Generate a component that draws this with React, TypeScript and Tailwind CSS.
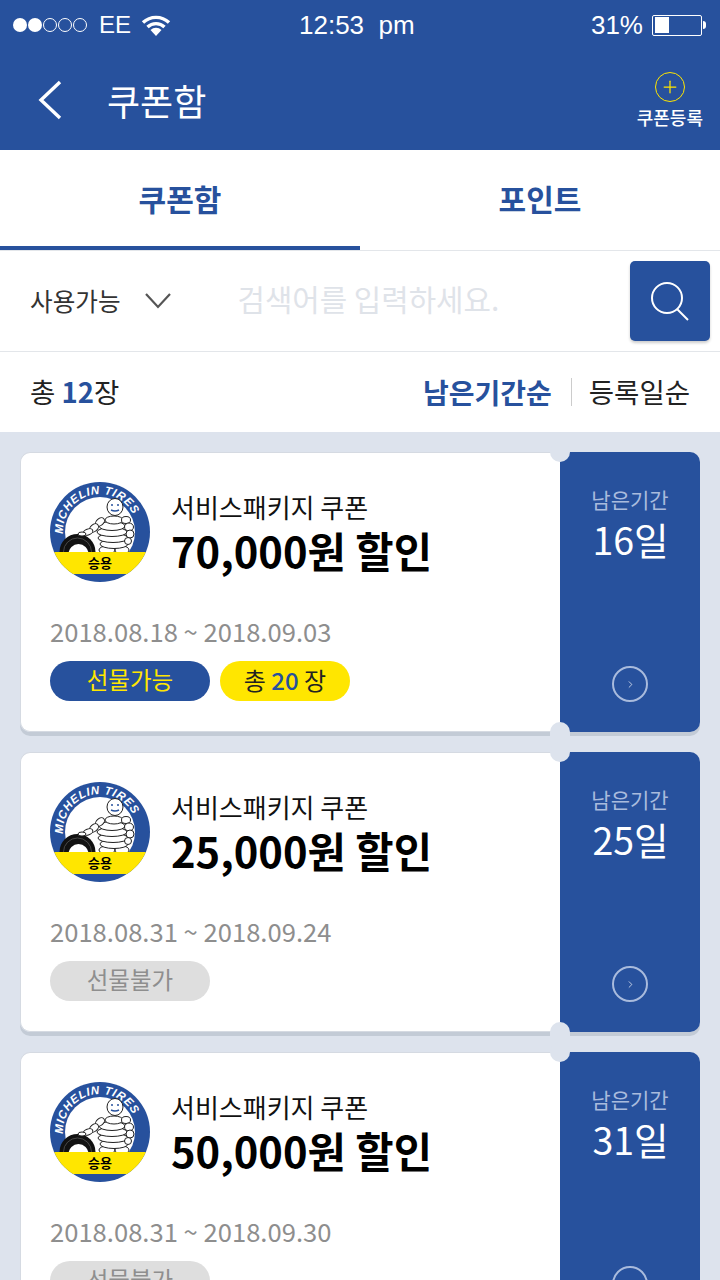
import { ChevronRight, Plus } from "lucide-react"

const cjk = "font-['Noto_Sans_CJK_KR','Noto_Sans',sans-serif]"

const coupons = [
  { amount: "70,000원 할인", period: "2018.08.18 ~ 2018.09.03", days: "16일", gift: true },
  { amount: "25,000원 할인", period: "2018.08.31 ~ 2018.09.24", days: "25일", gift: false },
  { amount: "50,000원 할인", period: "2018.08.31 ~ 2018.09.30", days: "31일", gift: false },
]

const MichelinLogo = ({ id }: { id: string }) => {
  return (
    <div className="relative h-[100px] w-[100px] shrink-0">
      <svg viewBox="0 0 100 100" className="h-full w-full">
        <defs>
          <clipPath id={`round-${id}`}>
            <circle cx="50" cy="50" r="50" />
          </clipPath>
          <clipPath id={`inner-${id}`}>
            <rect x="0" y="0" width="100" height="70" />
          </clipPath>
          <path id={`arc-${id}`} d="M 13.5 55 A 37 37 0 1 1 86.5 55" fill="none" />
        </defs>
        <circle cx="50" cy="50" r="50" fill="#27519d" />
        <circle cx="50" cy="50" r="35" fill="#fff" />
        <text fill="#fff" fontSize="11.5" fontWeight="700" fontStyle="italic" letterSpacing="0.7" fontFamily="Liberation Sans, sans-serif">
          <textPath href={`#arc-${id}`} startOffset="3">MICHELIN TIRES</textPath>
        </text>
        <g clipPath={`url(#inner-${id})`}>
          <circle cx="27.5" cy="70" r="18" fill="#111" />
          <circle cx="28.5" cy="72" r="10" fill="#fff" />
          <circle cx="27.5" cy="70" r="14" fill="none" stroke="#555" strokeWidth="0.8" />
          <g fill="#fff" stroke="#222" strokeWidth="1">
            <ellipse cx="57" cy="68" rx="8" ry="4" />
            <ellipse cx="72" cy="68" rx="7" ry="4" />
            <ellipse cx="64" cy="62" rx="14" ry="4.5" />
            <ellipse cx="63" cy="56" rx="15" ry="4.5" />
            <ellipse cx="62" cy="50" rx="15" ry="4.5" />
            <ellipse cx="62" cy="44" rx="13" ry="4.5" />
            <ellipse cx="64" cy="38" rx="9" ry="4" />
            <ellipse cx="76" cy="38" rx="4.5" ry="3.5" />
            <ellipse cx="79" cy="45" rx="4.5" ry="4" />
            <ellipse cx="80" cy="52" rx="4" ry="4" />
            <ellipse cx="78" cy="59" rx="3.5" ry="3.5" />
            <ellipse cx="50" cy="40" rx="5" ry="3.5" transform="rotate(-40 50 40)" />
            <ellipse cx="44" cy="46" rx="5" ry="3.5" transform="rotate(-40 44 46)" />
            <ellipse cx="38" cy="50" rx="5" ry="3" transform="rotate(-20 38 50)" />
            <ellipse cx="32" cy="52" rx="4" ry="2" />
            <ellipse cx="65" cy="25" rx="8" ry="8.5" />
          </g>
          <path d="M61 23h2M67 23h2M61 28q4 2 8 0" stroke="#27519d" strokeWidth="1.5" fill="none" />
        </g>
        <g clipPath={`url(#round-${id})`}>
          <rect x="0" y="70" width="100" height="22" fill="#ffe600" />
        </g>
      </svg>
      <span className={`${cjk} absolute left-0 right-0 top-[70px] text-center text-[13px] font-bold leading-[22px] text-black`}>승용</span>
    </div>
  )
}

const CouponCard = ({ amount, period, days, gift, id }: { amount: string; period: string; days: string; gift: boolean; id: string }) => {
  return (
    <div className="relative flex h-[280px] shrink-0 rounded-[10px] shadow-[0_4px_0_#c3cbd6]">
      <div className="flex w-[540px] flex-col rounded-l-[10px] border border-r-0 border-[#d5dae2] bg-white pl-[29px] pt-[29px]">
        <div className="flex items-start gap-[21px]">
          <MichelinLogo id={id} />
          <div className="pt-[7px]">
            <p className="text-[26px] leading-[36px] text-[#111]">서비스패키지 쿠폰</p>
            <p className="text-[41.7px] font-bold leading-[50px] text-black">{amount}</p>
          </div>
        </div>
        <p className="mt-[31px] text-[25.6px] leading-[36px] text-[#8e8e8e]">{period}</p>
        <div className="mt-[12px] flex gap-[10px]">
          {gift ? (
            <span className="flex h-[40px] w-[160px] items-center justify-center rounded-full bg-[#27519d] pb-[3px] text-[23.5px] text-[#ffe600]">선물가능</span>
          ) : (
            <span className="flex h-[40px] w-[160px] items-center justify-center rounded-full bg-[#dedede] pb-[3px] text-[23.5px] text-[#8e8e8e]">선물불가</span>
          )}
          {gift && (
            <span className="flex h-[40px] w-[130px] items-center justify-center rounded-full bg-[#ffe600] pb-[3px] text-[24px] text-[#222]">
              총&nbsp;<span className="font-medium text-[#27519d]">20</span>&nbsp;장
            </span>
          )}
        </div>
      </div>
      <div className="flex w-[140px] flex-col items-center rounded-r-[10px] bg-[#27519d] pt-[32px]">
        <p className="text-[21px] leading-[30px] text-[#a9bbdd]">남은기간</p>
        <p className="ml-[1px] text-[37.5px] leading-[50px] text-white">{days}</p>
        <div className="mt-[102px] flex h-[36px] w-[36px] items-center justify-center rounded-full border-2 border-[#a9bbdd]">
          <ChevronRight size={11} strokeWidth={1.5} className="text-white" />
        </div>
      </div>
      <span className="absolute left-[530px] top-[-10px] h-[20px] w-[20px] rounded-full bg-[#dde3ed]" />
      <span className="absolute bottom-[-10px] left-[530px] h-[20px] w-[20px] rounded-t-full bg-[#dde3ed]" />
    </div>
  )
}

export default function App() {
  return (
    <div className={`${cjk} flex h-[1280px] w-[720px] flex-col overflow-hidden bg-[#dde3ed]`}>
      <div className="h-[150px] shrink-0 bg-[#27519d] text-white">
        <div className="flex h-[50px] items-center pl-[13px] pr-[14px] font-['Liberation_Sans',sans-serif] text-[26px]">
          <div className="flex w-[286px] items-center">
            <div className="flex gap-[1px]">
              <span className="h-[14px] w-[14px] rounded-full bg-white" />
              <span className="h-[14px] w-[14px] rounded-full bg-white" />
              <span className="h-[14px] w-[14px] rounded-full border border-white" />
              <span className="h-[14px] w-[14px] rounded-full border border-white" />
              <span className="h-[14px] w-[14px] rounded-full border border-white" />
            </div>
            <span className="ml-[12px] text-[24px]">EE</span>
            <svg viewBox="0 0 30 22" className="ml-[10px] h-[22px] w-[30px]">
              <path d="M2 8.5a19 19 0 0 1 26 0M6.5 13a12.5 12.5 0 0 1 17 0" fill="none" stroke="#fff" strokeWidth="3.4" />
              <path d="M9.5 16a8 8 0 0 1 11 0L15 22z" fill="#fff" />
            </svg>
          </div>
          <span>12:53&nbsp; pm</span>
          <div className="ml-auto flex items-center">
            <span>31%</span>
            <div className="ml-[9px] h-[21px] w-[50px] rounded-[2px] border-[1.5px] border-white p-[1.5px]">
              <div className="h-full w-[14px] bg-white" />
            </div>
            <span className="ml-[1px] h-[8px] w-[3px] rounded-r-full bg-white" />
          </div>
        </div>
        <div className="flex h-[100px] items-center justify-between pl-[37px] pr-[17px]">
          <div className="flex items-center">
            <svg viewBox="0 0 26 40" className="h-[40px] w-[26px]" fill="none" stroke="#fff" strokeWidth="3.4">
              <path d="M23 2L4 20l19 18" />
            </svg>
            <h1 className="ml-[44px] text-[36px] font-normal leading-none">쿠폰함</h1>
          </div>
          <div className="flex flex-col items-center">
            <span className="flex h-[30px] w-[30px] items-center justify-center rounded-full border border-[#ffe600]">
              <Plus size={20} strokeWidth={1.5} className="text-[#ffe600]" />
            </span>
            <span className="mt-[3px] text-[18px] font-medium leading-[24px]">쿠폰등록</span>
          </div>
        </div>
      </div>

      <div className="flex h-[101px] shrink-0 border-b border-[#e3e6ea] bg-white text-[30px] font-bold">
        <div className="flex h-[100px] w-[360px] items-center justify-center border-b-4 border-[#27519d] text-[#27519d]">쿠폰함</div>
        <div className="flex h-[100px] w-[360px] items-center justify-center pb-[4px] text-[#27519d]">포인트</div>
      </div>

      <div className="flex h-[101px] shrink-0 items-center border-b border-[#e3e6ea] bg-white pl-[30px] pr-[10px]">
        <span className="pb-[2px] text-[24.6px] text-[#333]">사용가능</span>
        <svg viewBox="0 0 26 16" className="ml-[24px] h-[16px] w-[26px]" fill="none" stroke="#555" strokeWidth="2.2">
          <path d="M1 1l12 13L25 1" />
        </svg>
        <span className="ml-[67px] pb-[5px] text-[29.8px] text-[#dfe3e9]">검색어를 입력하세요.</span>
        <div className="ml-auto flex h-[80px] w-[80px] items-center justify-center rounded-[5px] bg-[#27519d] shadow-[0_2px_3px_rgba(0,0,0,0.2)]">
          <svg viewBox="0 0 40 40" className="h-[40px] w-[40px]" fill="none" stroke="#fff" strokeWidth="2">
            <circle cx="17" cy="17" r="15" />
            <path d="M27 28l11 11" />
          </svg>
        </div>
      </div>

      <div className="flex h-[80px] shrink-0 items-center justify-between bg-white px-[30px] text-[27.5px]">
        <span className="text-[#222]">총 <span className="font-bold text-[#27519d]">12</span>장</span>
        <div className="flex items-center">
          <span className="text-[28px] font-bold text-[#27519d]">남은기간순</span>
          <span className="ml-[19px] mr-[17px] h-[28px] w-px bg-[#ccc]" />
          <span className="text-[#222]">등록일순</span>
        </div>
      </div>

      <div className="flex flex-col gap-[20px] px-[20px] pt-[20px]">
        {coupons.map((c, i) => (
          <CouponCard key={c.amount} id={String(i)} {...c} />
        ))}
      </div>
    </div>
  )
}
